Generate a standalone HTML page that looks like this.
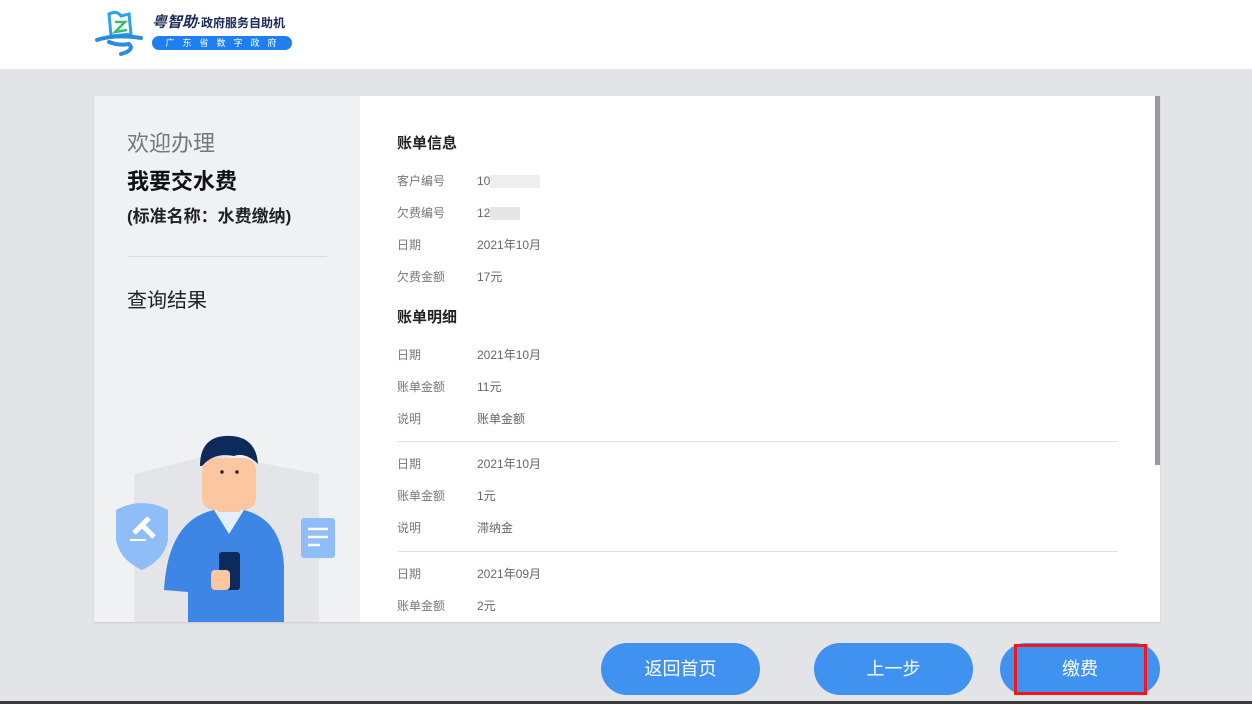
<!DOCTYPE html>
<html><head><meta charset="utf-8"><style>
*{margin:0;padding:0;box-sizing:border-box}
body{width:1252px;height:704px;overflow:hidden;background:#e3e4e8;font-family:"Liberation Sans","Noto Sans CJK SC",sans-serif;position:relative}
.hdr{position:absolute;left:0;top:0;width:1252px;height:69px;background:#fff}
.card{position:absolute;left:94px;top:96px;width:1066px;height:526px;background:#fff;overflow:hidden;box-shadow:0 1px 2px rgba(0,0,0,.1)}
.left{position:absolute;left:0;top:0;width:266px;height:526px;background:#f0f1f3}
.t{position:absolute;white-space:nowrap;line-height:1}
.lab{position:absolute;left:303px;font-size:12px;color:#777;line-height:1;margin-top:1px}
.val{position:absolute;left:383px;font-size:12px;color:#666;line-height:1;margin-top:1px}
.h{position:absolute;left:303px;font-size:15px;font-weight:bold;color:#222;line-height:1;margin-top:1px}
.div{position:absolute;left:303px;width:721px;height:1px;background:#e2e2e2}
.btn{position:absolute;top:643px;height:52px;border-radius:26px;background:#3f92f0;color:#fff;font-size:18px;text-align:center;line-height:52px}
</style></head><body>
<div class="hdr">
<svg style="position:absolute;left:95px;top:8px" width="50" height="48" viewBox="0 0 50 48">
<path d="M14 6 Q22 2 26 8 L34 6 L36 26 L16 28 Z" fill="none" stroke="#2aa4e8" stroke-width="3"/>
<path d="M20 14 L30 14 L20 24 L32 22" fill="none" stroke="#3cb878" stroke-width="2.5"/>
<path d="M2 32 Q20 26 46 30" fill="none" stroke="#2a8ce0" stroke-width="4" stroke-linecap="round"/>
<path d="M14 34 Q24 38 34 36 Q40 42 26 46" fill="none" stroke="#2a8ce0" stroke-width="4" stroke-linecap="round"/>
</svg>
<div class="t" style="left:152px;top:15px;font-size:15px;font-weight:bold;color:#1a2a5a;font-style:italic">粤智助<span style="font-size:12px;font-style:normal">·政府服务自助机</span></div>
<div style="position:absolute;left:152px;top:36px;width:140px;height:14px;border-radius:7px;background:#1f7ff0;color:#fff;font-size:9px;line-height:14px;text-align:center;letter-spacing:8px;padding-left:6px">广东省数字政府</div>
</div>
<div class="card">
<div class="left">
<div class="t" style="left:33px;top:37px;font-size:22px;color:#777">欢迎办理</div>
<div class="t" style="left:33px;top:75px;font-size:22px;font-weight:bold;color:#111">我要交水费</div>
<div class="t" style="left:33px;top:112px;font-size:17px;font-weight:bold;color:#222">(标准名称：水费缴纳)</div>
<div style="position:absolute;left:34px;top:160px;width:199px;height:1px;background:#d8d8d8"></div>
<div class="t" style="left:33px;top:195px;font-size:20px;color:#222">查询结果</div>
<svg style="position:absolute;left:0;top:316px" width="266" height="210" viewBox="0 0 266 210">
<path d="M40 62 L120 42 L120 210 L40 210 Z" fill="#e3e5e9"/>
<path d="M120 42 L225 62 L225 210 L120 210 Z" fill="#e3e5e9"/>
<path d="M22 98 Q48 84 74 98 L74 128 Q70 148 48 158 Q26 148 22 128 Z" fill="#8fbdf7"/>
<path d="M40 121 L55 106 M48 113 L60 125" stroke="#fff" stroke-width="5"/><path d="M36 128 L52 128" stroke="#fff" stroke-width="2"/>
<rect x="207" y="106" width="34" height="40" rx="3" fill="#8fbdf7"/>
<path d="M214 117 H234 M214 125 H234 M214 133 H226" stroke="#fff" stroke-width="2.5"/>
<path d="M70 178 Q74 108 120 98 L150 98 Q188 108 190 155 L190 210 L94 210 L94 180 Z" fill="#3d86e6"/>
<path d="M120 98 L135 122 L150 98 Z" fill="#e4eef8"/>
<rect x="124" y="68" width="22" height="32" fill="#f9c5a0"/>
<rect x="108" y="46" width="54" height="52" rx="12" fill="#fbc6a0"/>
<path d="M106 54 Q106 22 138 24 Q162 26 164 52 L162 50 Q150 40 140 44 Q120 40 108 54 Z" fill="#0e2a5a"/>
<circle cx="128" cy="60" r="1.7" fill="#222"/><circle cx="143" cy="60" r="1.7" fill="#222"/>
<rect x="125" y="140" width="21" height="38" rx="3" fill="#0e2a5a"/>
<rect x="117" y="158" width="19" height="20" rx="4" fill="#fbc6a0"/>
</svg>
</div>
<div class="h" style="top:39px">账单信息</div>
<div class="lab" style="top:78px">客户编号</div><div class="val" style="top:78px">10<span style="display:inline-block;width:50px;height:13px;background:#eee;vertical-align:middle"></span></div>
<div class="lab" style="top:110px">欠费编号</div><div class="val" style="top:110px">12<span style="display:inline-block;width:30px;height:13px;background:#e6e6e6;vertical-align:middle"></span></div>
<div class="lab" style="top:142px">日期</div><div class="val" style="top:142px">2021年10月</div>
<div class="lab" style="top:174px">欠费金额</div><div class="val" style="top:174px">17元</div>
<div class="h" style="top:213px">账单明细</div>
<div class="lab" style="top:252px">日期</div><div class="val" style="top:252px">2021年10月</div>
<div class="lab" style="top:284px">账单金额</div><div class="val" style="top:284px">11元</div>
<div class="lab" style="top:316px">说明</div><div class="val" style="top:316px">账单金额</div>
<div class="div" style="top:345px"></div>
<div class="lab" style="top:361px">日期</div><div class="val" style="top:361px">2021年10月</div>
<div class="lab" style="top:393px">账单金额</div><div class="val" style="top:393px">1元</div>
<div class="lab" style="top:425px">说明</div><div class="val" style="top:425px">滞纳金</div>
<div class="div" style="top:455px"></div>
<div class="lab" style="top:471px">日期</div><div class="val" style="top:471px">2021年09月</div>
<div class="lab" style="top:503px">账单金额</div><div class="val" style="top:503px">2元</div>
<div style="position:absolute;left:1061px;top:0;width:5px;height:369px;background:#999"></div>
</div>
<div class="btn" style="left:601px;width:159px">返回首页</div>
<div class="btn" style="left:814px;width:159px">上一步</div>
<div class="btn" style="left:1000px;width:160px">缴费</div>
<div style="position:absolute;left:1014px;top:644px;width:133px;height:51px;border:3px solid #f5161b"></div>
<div style="position:absolute;left:0;top:701px;width:1252px;height:3px;background:#3a3a3a"></div>
</body></html>
